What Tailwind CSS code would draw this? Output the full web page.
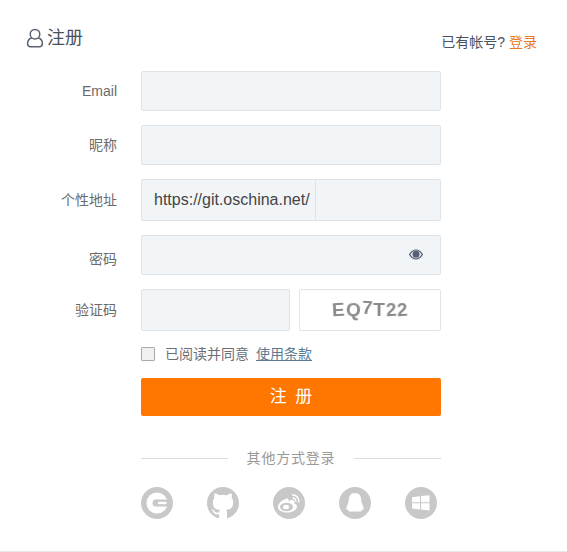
<!DOCTYPE html>
<html lang="zh-CN">
<head>
    <meta charset="UTF-8">
    <title>注册</title>
    <script src="https://cdn.jsdelivr.net/npm/@tailwindcss/browser@4"></script>
</head>
<body class="bg-white font-['Liberation_Sans','Noto_Sans_CJK_SC',sans-serif] text-[14px]">
    <div class="w-[567px] h-[552px] overflow-hidden border-b border-[#e8e8e8] flex flex-col">
        <!-- header -->
        <div class="flex items-start justify-between pl-[26px] pr-[30px] pt-[27px] h-[71px]">
            <div class="flex items-center gap-[3px] h-[22px] text-[18px] text-[#4a5260]">
                <svg class="w-[18px] h-[20px]" viewBox="0 0 18 20" fill="none" stroke="#5a6270" stroke-width="1.5">
                    <circle cx="9" cy="6.200" r="4.800"/>
                    <path d="M5.800 9.800C3.200 10.800 1.600 12.800 1.600 15.400C1.600 17.600 2.600 18.700 4.600 18.700H13.400C15.400 18.700 16.400 17.600 16.400 15.400C16.400 12.800 14.800 10.800 12.200 9.800"/>
                </svg>
                <span class="pt-[1px]">注册</span>
            </div>
            <div class="mt-[7px] text-[#4a5260] leading-[16px]">已有帐号? <a class="text-[#e87a24]">登录</a></div>
        </div>

        <!-- form -->
        <div class="flex flex-col gap-[14px]">
            <div class="flex items-center">
                <label class="w-[117px] text-right text-[#6b6b6b]">Email</label>
                <div class="ml-[24px] w-[300px] h-[40px] bg-[#f2f5f8] border border-[#e0e4e8] rounded-[2px]"></div>
            </div>
            <div class="flex items-center">
                <label class="w-[117px] text-right text-[#6b6b6b]">昵称</label>
                <div class="ml-[24px] w-[300px] h-[40px] bg-[#f2f5f8] border border-[#e0e4e8] rounded-[2px]"></div>
            </div>
            <div class="flex items-center">
                <label class="w-[117px] text-right text-[#6b6b6b]">个性地址</label>
                <div class="ml-[24px] w-[300px] h-[42px] bg-[#f2f5f8] border border-[#e0e4e8] rounded-[2px] flex">
                    <div class="w-[174px] border-r border-[#e0e4e8] pl-[12px] flex items-center text-[16px] text-[#444] whitespace-nowrap">https://git.oschina.net/</div>
                </div>
            </div>
            <div class="flex items-center">
                <label class="w-[117px] text-right text-[#6b6b6b] pt-[9px]">密码</label>
                <div class="ml-[24px] w-[300px] h-[40px] bg-[#f2f5f8] border border-[#e0e4e8] rounded-[2px] flex items-center justify-end pr-[17px]">
                    <svg class="w-[14px] h-[11px] -translate-y-[1px]" viewBox="0 0 14 11">
                        <path fill="#566072" fill-rule="evenodd" d="M7 0.500C10.300 0.500 12.800 3 14 5.500C12.800 8 10.300 10.500 7 10.500C3.700 10.500 1.200 8 0 5.500C1.200 3 3.700 0.500 7 0.500ZM7 1.600C4.700 1.600 2.600 3.500 1.400 5.500C2.600 7.500 4.700 9.400 7 9.400C9.300 9.400 11.400 7.500 12.600 5.500C11.400 3.500 9.300 1.600 7 1.600Z"/>
                        <circle cx="7" cy="5.200" r="3.500" fill="#566072"/>
                    </svg>
                </div>
            </div>
            <div class="flex items-center">
                <label class="w-[117px] text-right text-[#6b6b6b]">验证码</label>
                <div class="ml-[24px] w-[149px] h-[42px] bg-[#f2f5f8] border border-[#e0e4e8] rounded-[2px]"></div>
                <div class="ml-[9px] w-[142px] h-[42px] bg-white border border-[#e0e4e8] rounded-[2px] flex items-center justify-center gap-[1px] text-[19px] font-bold text-[#8a8a8a]">
                    <span class="blur-[0.7px] rotate-[-3deg]">E</span>
                    <span class="blur-[0.7px] rotate-[5deg]">Q</span>
                    <span class="blur-[0.7px] rotate-[3deg] -translate-y-[2px]">7</span>
                    <span class="blur-[0.7px]">T</span>
                    <span class="blur-[0.7px] rotate-[-4deg]">2</span>
                    <span class="blur-[0.7px] rotate-[-4deg]">2</span>
                </div>
            </div>
        </div>

        <!-- agreement -->
        <div class="ml-[141px] mt-[15px] flex items-center h-[16px]">
            <span class="w-[14px] h-[14px] bg-[#eef0f2] border border-[#a9a9a9] rounded-[1px]"></span>
            <span class="ml-[10px] text-[#6b6f75]">已阅读并同意</span>
            <a class="ml-[7px] text-[#5d7a92] underline">使用条款</a>
        </div>

        <!-- submit -->
        <button class="ml-[141px] mt-[16px] w-[300px] h-[38px] pl-[2px] bg-[#ff7600] rounded-[2px] text-white text-[17px] tracking-[2px]">注 册</button>

        <!-- other logins -->
        <div class="ml-[141px] mt-[32px] w-[300px] flex items-center justify-between h-[20px]">
            <div class="w-[87px] h-px bg-[#dcdcdc]"></div>
            <span class="text-[#999] tracking-[0.8px]">其他方式登录</span>
            <div class="w-[87px] h-px bg-[#dcdcdc]"></div>
        </div>
        <div class="ml-[141px] mt-[19px] w-[296px] flex justify-between">
            <!-- gitee style C -->
            <svg class="w-[32px] h-[32px]" viewBox="0 0 32 32">
                <circle cx="16" cy="16" r="16" fill="#c8c8c8"/>
                <circle cx="16" cy="16" r="10.500" fill="#fff"/>
                <path fill="#c8c8c8" d="M15 12.500H27V19.500H15Z"/>
                <circle cx="15" cy="16" r="3.500" fill="#c8c8c8"/>
                <path fill="#fff" d="M17 14.800H25.500V17.200H17Z"/>
            </svg>
            <!-- github -->
            <svg class="w-[32px] h-[32px]" viewBox="0 0 16 16">
                <path fill="#c8c8c8" d="M8 0C3.580 0 0 3.580 0 8c0 3.540 2.290 6.530 5.470 7.590.4.070.55-.17.55-.38 0-.19-.01-.82-.01-1.490-2.010.37-2.530-.49-2.690-.94-.09-.23-.48-.94-.82-1.130-.28-.15-.68-.52-.01-.53.63-.01 1.080.58 1.230.82.72 1.210 1.870.87 2.330.66.070-.52.280-.87.510-1.070-1.780-.2-3.640-.89-3.640-3.950 0-.87.31-1.590.82-2.150-.08-.2-.36-1.020.08-2.120 0 0 .67-.21 2.200.82.64-.18 1.320-.27 2-.27.68 0 1.360.09 2 .27 1.530-1.040 2.200-.82 2.200-.82.44 1.100.16 1.920.08 2.120.51.56.82 1.270.82 2.150 0 3.070-1.870 3.750-3.650 3.950.29.25.54.73.54 1.480 0 1.070-.01 1.930-.01 2.200 0 .21.15.46.55.38A8.013 8.013 0 0016 8c0-4.420-3.580-8-8-8z"/>
            </svg>
            <!-- weibo -->
            <svg class="w-[32px] h-[32px]" viewBox="0 0 32 32">
                <circle cx="16" cy="16" r="16" fill="#c8c8c8"/>
                <path fill="#fff" d="M14 11.500C9.500 12.500 5 16.500 5 20C5 23.500 9.500 25.500 14 25.500C19.500 25.500 24 22.800 24 19.500C24 17.500 22.300 16.800 21.200 16.500C21.700 15 21.500 13.800 20.500 13.300C19 12.700 17 13.500 15.500 14.200C15.800 12.500 15.500 11.200 14 11.500Z"/>
                <ellipse cx="13.500" cy="20" rx="6.500" ry="4.200" fill="#c8c8c8"/>
                <ellipse cx="13" cy="20" rx="3" ry="2.300" fill="#fff"/>
                <path fill="none" stroke="#fff" stroke-width="1.500" d="M19 8C23 7.500 26.500 11 25.800 15.500"/>
                <path fill="none" stroke="#fff" stroke-width="1.300" d="M19.500 11C21.500 10.800 23.200 12.500 22.800 14.800"/>
            </svg>
            <!-- qq -->
            <svg class="w-[32px] h-[32px]" viewBox="0 0 32 32">
                <circle cx="16" cy="16" r="16" fill="#c8c8c8"/>
                <path fill="#fff" d="M16 6C11.600 6 9.800 9.200 9.800 13C9.800 15.500 8.500 17 7.500 20.500C7 22.500 7.800 23.300 9 22.500L9.800 24.500H22.200L23 22.500C24.200 23.300 25 22.500 24.500 20.500C23.500 17 22.200 15.500 22.200 13C22.200 9.200 20.400 6 16 6Z"/>
            </svg>
            <!-- windows -->
            <svg class="w-[32px] h-[32px]" viewBox="0 0 32 32">
                <circle cx="16" cy="16" r="16" fill="#c8c8c8"/>
                <path fill="#fff" d="M7 10.200L15 9.300V15.200H7ZM16 9.100L24.500 8.200V15.200H16ZM7 16.200H15V22.400L7 21.600ZM16 16.200H24.500V23.500L16 22.600Z"/>
            </svg>
        </div>
    </div>
</body>
</html>
